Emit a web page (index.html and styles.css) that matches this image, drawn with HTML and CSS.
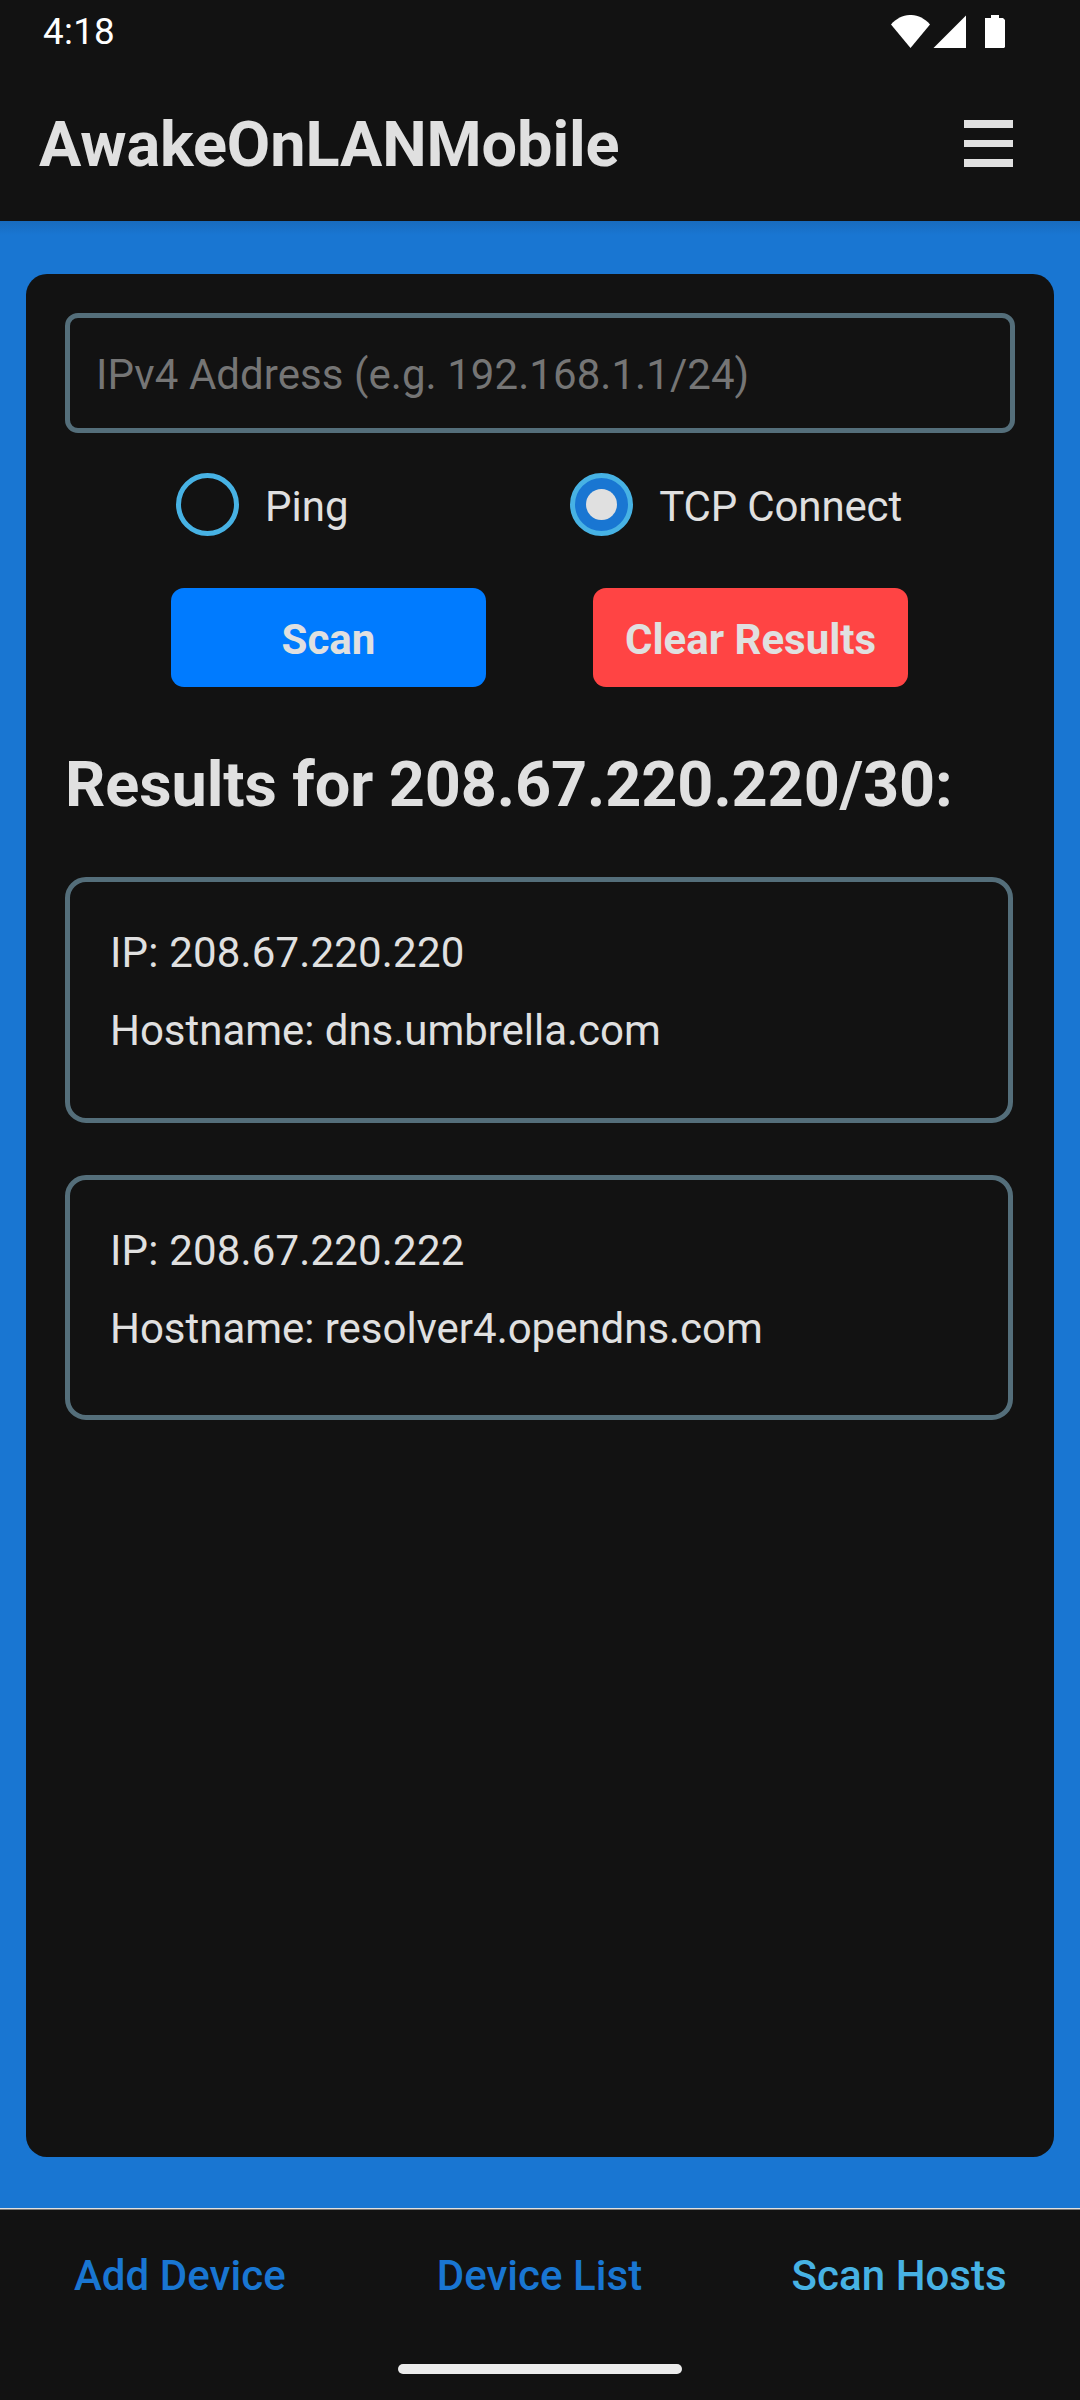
FILE: index.html
```html
<!DOCTYPE html>
<html lang="en">
<head>
<meta charset="utf-8">
<title>AwakeOnLANMobile</title>
<link rel="stylesheet" href="styles.css">
</head>
<body>
<div class="status-bar">
  <span class="clock">4:18</span>
  <svg class="status-icons" width="116" height="34" viewBox="0 0 116 34" fill="#fff" aria-hidden="true">
    <path d="M0 9.5C11-3.2 28-3.2 39 9.5L19.5 33Z"/>
    <path d="M42.5 33L75 .5V33Z"/>
    <path d="M100 0h8v3h4l2 2v27l-1 1h-19V3h6Z"/>
  </svg>
</div>
<header class="app-bar">
  <h1 class="app-title">AwakeOnLANMobile</h1>
  <button class="menu" aria-label="Menu"><span class="menu-line"></span><span class="menu-line"></span><span class="menu-line"></span></button>
</header>
<main class="screen">
  <section class="panel">
    <input class="address" type="text" placeholder="IPv4 Address (e.g. 192.168.1.1/24)">
    <div class="modes">
      <div class="mode"><span class="radio"></span><span class="mode-label">Ping</span></div>
      <div class="mode"><span class="radio radio-on"></span><span class="mode-label mode-label-tight">TCP Connect</span></div>
    </div>
    <div class="actions">
      <button class="button scan">Scan</button>
      <button class="button clear">Clear Results</button>
    </div>
    <h2 class="results-title">Results for 208.67.220.220/30:</h2>
    <div class="results">
      <article class="result"><p class="ip">IP: 208.67.220.220</p><p class="hostname">Hostname: dns.umbrella.com</p></article>
      <article class="result"><p class="ip">IP: 208.67.220.222</p><p class="hostname">Hostname: resolver4.opendns.com</p></article>
    </div>
  </section>
</main>
<footer class="footer">
  <nav class="tabs">
    <a class="tab">Add Device</a>
    <a class="tab">Device List</a>
    <a class="tab tab-active">Scan Hosts</a>
  </nav>
  <div class="home-bar"></div>
</footer>
</body>
</html>
```
FILE: styles.css
```css
* { box-sizing: border-box; margin: 0; }

body {
  display: flex;
  flex-direction: column;
  width: 1080px;
  height: 2400px;
  background: #121212;
  color: #e0e0e0;
  font: 42px/56px Roboto, sans-serif;
}

button { border: 0; color: inherit; font: inherit; }

.status-bar {
  display: flex;
  justify-content: space-between;
  align-items: center;
  height: 63px;
  padding: 0 73px 0 43px;
}
.clock { color: #fff; font-size: 36.75px; letter-spacing: 0.3px; }
.status-icons { display: block; }

.app-bar {
  display: flex;
  justify-content: space-between;
  align-items: center;
  height: 158px;
  padding: 5px 67px 0 39px;
}
.app-title { font-size: 63px; line-height: 74px; font-weight: 700; letter-spacing: -0.1px; }
.menu {
  display: flex;
  flex-direction: column;
  gap: 12px;
  margin-top: -2px;
  padding: 0;
  background: none;
}
.menu-line { width: 49px; height: 7.7px; background: #e0e0e0; }

.screen {
  display: flex;
  flex: 1;
  padding: 53px 26px 51px;
  background: #1976d2 linear-gradient(#186bbd, #1976d2) 0 0 / 100% 14px no-repeat;
}
.panel {
  flex: 1;
  padding: 39px;
  border-radius: 21px;
  background: #121212;
}

.address {
  display: block;
  width: 950px;
  height: 120px;
  padding: 3px 26px 0;
  border: 5px solid #546e7a;
  border-radius: 13px;
  background: none;
  color: inherit;
  font: inherit;
  letter-spacing: 0.06px;
}
.address::placeholder { color: #757575; }

.modes {
  display: flex;
  justify-content: space-between;
  margin-top: 40px;
  padding: 0 113px 0 111px;
}
.mode { display: flex; align-items: center; gap: 26px; height: 63px; }
.mode-label { padding-top: 4px; }
.mode-label-tight { letter-spacing: -0.15px; }
.radio {
  display: grid;
  place-items: center;
  width: 63px;
  height: 63px;
  border: 5px solid #47b2e4;
  border-radius: 50%;
}
.radio-on { background: #1976d2; }
.radio-on::after {
  content: "";
  width: 31px;
  height: 31px;
  border-radius: 50%;
  background: #e0e0e0;
}

.actions {
  display: flex;
  justify-content: center;
  gap: 107px;
  margin-top: 52px;
  padding-right: 1px;
}
.button {
  width: 315px;
  height: 99px;
  padding: 4px 0 0;
  border-radius: 13px;
  font-weight: 700;
}
.scan { background: #007bff; }
.clear { background: #ff4444; }

.results-title {
  margin: 61px 0 55px;
  font-size: 63px;
  line-height: 74px;
  font-weight: 700;
  letter-spacing: -0.1px;
}
.results { display: flex; flex-direction: column; gap: 52px; }
.result {
  display: flex;
  flex-direction: column;
  gap: 22px;
  width: 948px;
  height: 246px;
  padding: 43px 40px 0;
  border: 5px solid #546e7a;
  border-radius: 21px;
}
.result + .result { height: 245px; }
.ip { letter-spacing: 0.17px; }
.hostname { letter-spacing: -0.03px; }

.footer {
  display: flex;
  flex-direction: column;
  align-items: center;
  height: 192px;
  border-top: 1px solid #e0e0e0;
  box-shadow: inset 0 1px #777;
}
.tabs {
  display: grid;
  grid-template-columns: repeat(3, 1fr);
  width: 100%;
  padding: 39px 1px 0 0;
  text-align: center;
}
.tab { color: #1976d2; font-weight: 500; letter-spacing: 0.05px; }
.tab-active { color: #47b2e4; }
.home-bar {
  width: 284px;
  height: 10px;
  margin-top: 60px;
  border-radius: 5px;
  background: #ececec;
}
```
